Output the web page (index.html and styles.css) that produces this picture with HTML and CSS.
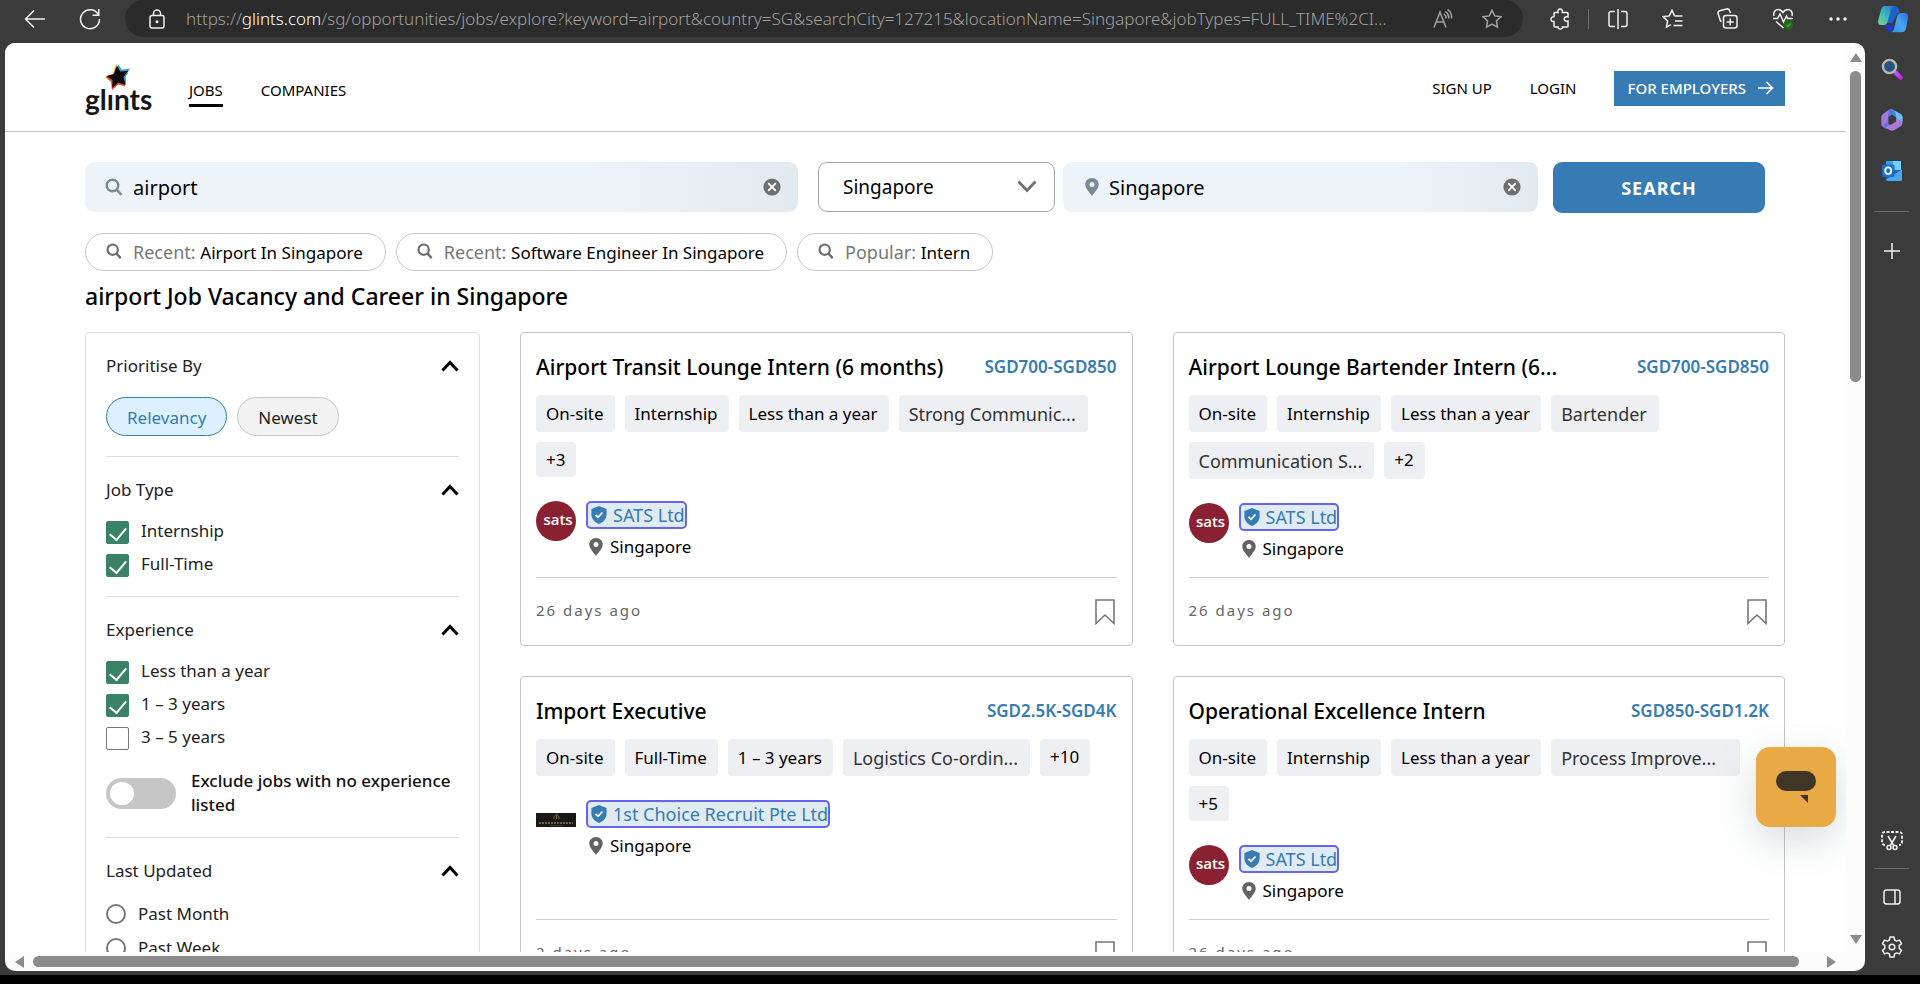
FILE: index.html
```html
<!DOCTYPE html>
<html lang="en">
<head>
<meta charset="utf-8">
<title>airport Job Vacancy and Career in Singapore</title>
<link rel="stylesheet" href="styles.css">
</head>
<body>
<svg class="defs" aria-hidden="true">
  <symbol id="search" viewBox="0 0 18 18"><circle cx="7.5" cy="7.5" r="5.8" fill="none" stroke="currentColor" stroke-width="2.4"/><path d="M11.7 11.7 16.5 17" stroke="currentColor" stroke-width="2.6"/></symbol>
  <symbol id="pin" viewBox="0 0 14 18"><path fill="currentColor" fill-rule="evenodd" d="M7 0C3.1 0 .3 2.9.3 6.4.3 10.500 4.500 14 7 18c2.500-4 6.700-7.500 6.700-11.600C13.700 2.900 10.900 0 7 0Zm0 4a2.500 2.500 0 1 1 0 5 2.500 2.500 0 0 1 0-5Z"/></symbol>
  <symbol id="clear" viewBox="0 0 18 18"><circle cx="9" cy="9" r="8.600" fill="#6f6f6f"/><path d="m5.200 5.200 7.600 7.600M12.800 5.200l-7.600 7.600" stroke="#fff" stroke-width="1.800"/></symbol>
  <symbol id="up" viewBox="0 0 18 12"><path d="m1.500 10.500 7.500-8 7.500 8" fill="none" stroke="#000" stroke-width="3"/></symbol>
  <symbol id="shield" viewBox="0 0 16 18"><path fill="#367bb3" d="M8 0 15.600 3v5.500C15.600 13 12 16.500 8 18 4 16.500.4 13 .4 8.500V3Z"/><path d="m4.500 8.800 2.500 2.500 4.500-4.800" fill="none" stroke="#fff" stroke-width="1.800"/></symbol>
  <symbol id="bookmark" viewBox="0 0 20 26"><path d="M1 1h18v23.500l-9-8.500-9 8.500Z" fill="none" stroke="#777" stroke-width="1.600"/></symbol>
</svg>

<header class="browser">
  <div class="browser-nav">
    <button class="tool" aria-label="Back"><svg width="22" height="20" viewBox="0 0 22 20"><path d="M21 10H1.500M10 1.500 1.500 10l8.500 8.500"/></svg></button>
    <button class="tool" aria-label="Refresh"><svg width="22" height="22" viewBox="0 0 22 22"><path d="M19.500 7A9.500 9.500 0 1 0 20.500 11M19.800 1v6.200h-6.300"/></svg></button>
  </div>
  <div class="address">
    <svg class="lock" width="16" height="20" viewBox="0 0 16 20"><rect x="1" y="6.500" width="14" height="12.500" rx="2"/><path d="M4.500 6.500V4.500a3.500 3.500 0 0 1 7 0v2"/><circle cx="8" cy="12.800" r=".8" fill="#fff"/></svg>
    <div class="url">https://<span class="host">glints.com</span>/sg/opportunities/jobs/explore?keyword=airport&amp;country=SG&amp;searchCity=127215&amp;locationName=Singapore&amp;jobTypes=FULL_TIME%2CI...</div>
    <button class="address-tool" aria-label="Read aloud"><svg width="20" height="20" viewBox="0 0 20 20"><path d="m1 18.500 6-15.500 6 15.500M3 13h8M11 5c1.500 1 2.200 2.500 2 4.500M12.500 2.500c2.500 1.700 3.500 4 3.200 7M14.500.5c3 2 4.300 5 4 9"/></svg></button>
    <button class="address-tool" aria-label="Add to favorites"><svg width="20" height="20" viewBox="0 0 20 20"><path d="m10 1.200 2.700 5.700 6.200.8-4.500 4.300 1.100 6.200L10 15.200l-5.500 3 1.100-6.200L1.100 7.700l6.200-.8Z"/></svg></button>
  </div>
  <div class="browser-tools">
    <button class="tool" aria-label="Extensions"><svg width="20" height="22" viewBox="0 0 20 22"><path d="M5 4.500h3C7.500 2 8.500 1 10 1s2.800 1 2.300 3.500H17a1 1 0 0 1 1 1V9c-2.500-.5-3.800.5-3.800 2s1.300 2.500 3.800 2v5a1 1 0 0 1-1 1h-4.500c.3 1.300-.8 2-2.200 2s-2.500-.7-2.200-2H5a1 1 0 0 1-1-1v-4.500c-1.500.2-3-.7-3-2.300s1.500-2.700 3-2.500V5.500a1 1 0 0 1 1-1Z"/></svg></button>
    <span class="tool-rule"></span>
    <button class="tool" aria-label="Split screen"><svg width="20" height="20" viewBox="0 0 20 20"><path d="M10 0v20M7 2.500H3a2 2 0 0 0-2 2v11a2 2 0 0 0 2 2h4M13 2.500h4a2 2 0 0 1 2 2v11a2 2 0 0 1-2 2h-4"/></svg></button>
    <button class="tool" aria-label="Favorites"><svg width="21" height="20" viewBox="0 0 21 20"><path d="M12.500 6.900 10 1.200 7.300 6.900l-6.200.8L5.600 12l-1.100 6.200 4.500-2.500M12.500 6.900H20.500M13 12h7.500M11.500 16.500h9"/></svg></button>
    <button class="tool" aria-label="Collections"><svg width="21" height="21" viewBox="0 0 21 21"><rect x="6.500" y="7.500" width="13.500" height="12.500" rx="2.500"/><path d="M13.200 10.500v7M9.700 14h7M4.500 13.500 3.500 13 1.200 6a2.500 2.500 0 0 1 1.500-3.200L9.500 1a2.500 2.500 0 0 1 3 1.500L13.500 5"/></svg></button>
    <button class="tool" aria-label="Browser essentials"><svg width="22" height="22" viewBox="0 0 22 22"><path d="M2 8C1 4 3.500 1.500 6 1.500c2.500 0 4 1.500 5 3 1-1.500 2.500-3 5-3s5 2.500 4 6.500M1 10.500h4.500L8 6l3.500 8 3-6 1 2.500H21M4 13.500l7.500 6.500"/><circle cx="16.500" cy="17" r="4.700" fill="#1f6b1a" stroke="none"/><path d="m14.500 17 1.500 1.500 2.500-3" stroke="#4a9a45"/></svg></button>
    <button class="tool" aria-label="Settings and more"><svg width="18" height="4" viewBox="0 0 18 4"><g fill="#fff" stroke="none"><circle cx="2" cy="2" r="1.700"/><circle cx="9" cy="2" r="1.700"/><circle cx="16" cy="2" r="1.700"/></g></svg></button>
    <button class="tool" aria-label="Copilot"><svg width="30" height="28" viewBox="0 0 30 28"><defs><linearGradient id="ca" x1="0" y1="1" x2="1" y2="0"><stop offset="0" stop-color="#7ed58c"/><stop offset=".5" stop-color="#3ab5c4"/><stop offset="1" stop-color="#1f6fd6"/></linearGradient><linearGradient id="cb" x1="0" y1="1" x2="1" y2="0"><stop offset="0" stop-color="#3a8ff0"/><stop offset=".5" stop-color="#47a6f2"/><stop offset="1" stop-color="#2f6fdf"/></linearGradient></defs><g stroke="none"><path fill="#1c62c8" d="M14 1h3c2 0 3 1 3.500 2.500L22 8h-2l-6 10H8Z"/><path fill="#2139c8" d="M7.500 20c1 5 2.500 7.300 6 7.300L16 20Z"/><path fill="url(#ca)" d="M7 1h10c-2 0-3.500 2-4.300 5l-3 10c-.9 3-1.700 4-4.200 4H3c-2.500 0-3.300-2-2.700-5L3 5c.8-2.600 2-4 4-4Z"/><path fill="url(#cb)" d="M13 27.300h11c2 0 3.300-1.500 4-4L30 13c.6-3-.4-5-3-5h-3.500c-2.500 0-3.500 1-4.500 4l-2.500 10c-1 3.500-1.500 5-3.500 5.300Z"/></g></svg></button>
  </div>
</header>

<div class="workspace">
  <div class="frame">
    <div class="viewport">
      <header class="site-header">
        <a class="logo" href="#" aria-label="glints">
          <svg width="28" height="28" viewBox="0 0 28 28"><path fill="#f6c93a" d="m12 1 3.800 6.500 8.400-.5-5 6.500 3 8.500-7.500-2.200L7.500 26l.2-8L1 13.500l7.500-2.500Z"/><path fill="#e5482e" d="m12 4 3.800 6.500 8.400-.5-5 6.500 2 7-7-2L8 27l-.8-8L1.500 14l7.500-2Z"/><path fill="#3fa0d8" d="m14 1 3.800 5.500 8.400-1-4.500 7 .5 9-8.700-3Z"/><path fill="#0b0b0b" d="m13 2.500 3.300 6 8-.8-4.800 6.300 2 8-7.200-2.500-6 5.500.2-8L2.500 13 10 11Z"/></svg>
          <span>glınts</span>
        </a>
        <nav class="nav">
          <a class="active" href="#">JOBS</a>
          <a href="#">COMPANIES</a>
        </nav>
        <nav class="account">
          <a href="#">SIGN UP</a>
          <a href="#">LOGIN</a>
          <a class="employers" href="#">FOR EMPLOYERS <svg width="16" height="14" viewBox="0 0 16 14"><path d="M0 7h14M8.500 1l6 6-6 6" fill="none" stroke="#fff" stroke-width="1.600"/></svg></a>
        </nav>
      </header>

      <main class="content">
        <form class="search-row">
          <label class="field"><svg class="field-icon" width="18" height="18"><use href="#search"/></svg><input type="text" value="airport" aria-label="Keyword"><button type="button" class="clear" aria-label="Clear keyword"><svg width="18" height="18"><use href="#clear"/></svg></button></label>
          <div class="country">
            <select aria-label="Country"><option>Singapore</option></select>
            <svg width="20" height="13" viewBox="0 0 20 13"><path d="m1.500 1.500 8.500 9 8.500-9" fill="none" stroke="#6f6f6f" stroke-width="2.800"/></svg>
          </div>
          <label class="field field-place"><svg class="field-icon" width="14" height="18"><use href="#pin"/></svg><input type="text" value="Singapore" aria-label="Location"><button type="button" class="clear" aria-label="Clear location"><svg width="18" height="18"><use href="#clear"/></svg></button></label>
          <button type="button" class="search-button">SEARCH</button>
        </form>

        <div class="recents">
          <a class="recent" href="#"><svg width="16" height="16"><use href="#search"/></svg><span>Recent: <b>Airport In Singapore</b></span></a>
          <a class="recent" href="#"><svg width="16" height="16"><use href="#search"/></svg><span>Recent: <b>Software Engineer In Singapore</b></span></a>
          <a class="recent" href="#"><svg width="16" height="16"><use href="#search"/></svg><span>Popular: <b>Intern</b></span></a>
        </div>

        <h1>airport Job Vacancy and Career in Singapore</h1>

        <div class="results">
          <aside class="filters">
            <section class="filter">
              <h2>Prioritise By <svg width="18" height="12"><use href="#up"/></svg></h2>
              <div class="sorts"><button class="sort selected">Relevancy</button><button class="sort">Newest</button></div>
            </section>
            <section class="filter">
              <h2>Job Type <svg width="18" height="12"><use href="#up"/></svg></h2>
              <div class="options">
                <label><input type="checkbox" checked>Internship</label>
                <label><input type="checkbox" checked>Full-Time</label>
              </div>
            </section>
            <section class="filter">
              <h2>Experience <svg width="18" height="12"><use href="#up"/></svg></h2>
              <div class="options">
                <label><input type="checkbox" checked>Less than a year</label>
                <label><input type="checkbox" checked>1 – 3 years</label>
                <label><input type="checkbox">3 – 5 years</label>
              </div>
              <label class="toggle"><input type="checkbox" role="switch"><span>Exclude jobs with no experience listed</span></label>
            </section>
            <section class="filter">
              <h2>Last Updated <svg width="18" height="12"><use href="#up"/></svg></h2>
              <div class="options radios">
                <label><input type="radio" name="updated">Past Month</label>
                <label><input type="radio" name="updated">Past Week</label>
              </div>
            </section>
          </aside>

          <div class="jobs">
            <article class="job">
              <div class="job-head"><h3>Airport Transit Lounge Intern (6 months)</h3><span class="salary">SGD700-SGD850</span></div>
              <div class="tags"><span class="tag">On-site</span><span class="tag">Internship</span><span class="tag">Less than a year</span><span class="tag skill">Strong Communic...</span><span class="tag more">+3</span></div>
              <div class="company">
                <span class="sats">sats</span>
                <div><a class="company-link" href="#"><svg width="16" height="18"><use href="#shield"/></svg>SATS Ltd</a><p class="place"><svg width="14" height="18"><use href="#pin"/></svg>Singapore</p></div>
              </div>
              <div class="job-foot"><time>26 days ago</time><button aria-label="Save job"><svg width="20" height="26"><use href="#bookmark"/></svg></button></div>
            </article>
            <article class="job">
              <div class="job-head"><h3>Airport Lounge Bartender Intern (6...</h3><span class="salary">SGD700-SGD850</span></div>
              <div class="tags"><span class="tag">On-site</span><span class="tag">Internship</span><span class="tag">Less than a year</span><span class="tag skill">Bartender</span><span class="tag skill">Communication S...</span><span class="tag more">+2</span></div>
              <div class="company">
                <span class="sats">sats</span>
                <div><a class="company-link" href="#"><svg width="16" height="18"><use href="#shield"/></svg>SATS Ltd</a><p class="place"><svg width="14" height="18"><use href="#pin"/></svg>Singapore</p></div>
              </div>
              <div class="job-foot"><time>26 days ago</time><button aria-label="Save job"><svg width="20" height="26"><use href="#bookmark"/></svg></button></div>
            </article>
            <article class="job">
              <div class="job-head"><h3>Import Executive</h3><span class="salary">SGD2.5K-SGD4K</span></div>
              <div class="tags"><span class="tag">On-site</span><span class="tag">Full-Time</span><span class="tag">1 – 3 years</span><span class="tag skill">Logistics Co-ordin...</span><span class="tag more">+10</span></div>
              <div class="company">
                <svg class="banner" width="40" height="14" viewBox="0 0 40 14"><rect width="40" height="14" fill="#191817"/><path d="M18 6V4l2.500-3L23 4v2M20.500 2.500V6" fill="none" stroke="#7d6d36"/><path d="M3 10h34" stroke="#6f6234" stroke-width="2" stroke-dasharray="2 1"/><path d="M14 12.500h13" stroke="#3f3a28"/></svg>
                <div><a class="company-link" href="#"><svg width="16" height="18"><use href="#shield"/></svg>1st Choice Recruit Pte Ltd</a><p class="place"><svg width="14" height="18"><use href="#pin"/></svg>Singapore</p></div>
              </div>
              <div class="job-foot"><time>2 days ago</time><button aria-label="Save job"><svg width="20" height="26"><use href="#bookmark"/></svg></button></div>
            </article>
            <article class="job">
              <div class="job-head"><h3>Operational Excellence Intern</h3><span class="salary">SGD850-SGD1.2K</span></div>
              <div class="tags"><span class="tag">On-site</span><span class="tag">Internship</span><span class="tag">Less than a year</span><span class="tag skill wide">Process Improve...</span><span class="tag more">+5</span></div>
              <div class="company">
                <span class="sats">sats</span>
                <div><a class="company-link" href="#"><svg width="16" height="18"><use href="#shield"/></svg>SATS Ltd</a><p class="place"><svg width="14" height="18"><use href="#pin"/></svg>Singapore</p></div>
              </div>
              <div class="job-foot"><time>26 days ago</time><button aria-label="Save job"><svg width="20" height="26"><use href="#bookmark"/></svg></button></div>
            </article>
          </div>
        </div>
      </main>
      <button class="chat" aria-label="Open chat"><svg width="40" height="32" viewBox="0 0 40 32"><rect width="40" height="20" rx="10" fill="#403628"/><path d="M24 24h8v8Z" fill="#403628"/></svg></button>
    </div>
    <div class="vbar" aria-hidden="true">
      <svg width="12" height="9" viewBox="0 0 12 9"><path d="M6 0 12 9H0Z" fill="#8b8b8b"/></svg>
      <div class="vtrack"><div class="vthumb"></div></div>
      <svg width="12" height="9" viewBox="0 0 12 9"><path d="M0 0h12L6 9Z" fill="#8b8b8b"/></svg>
    </div>
    <div class="hbar" aria-hidden="true">
      <svg width="9" height="12" viewBox="0 0 9 12"><path d="M9 0v12L0 6Z" fill="#8b8b8b"/></svg>
      <div class="hthumb"></div>
      <svg width="9" height="12" viewBox="0 0 9 12"><path d="m0 0 9 6-9 6Z" fill="#8b8b8b"/></svg>
    </div>
  </div>

  <aside class="sidebar">
    <button aria-label="Search"><svg width="22" height="22" viewBox="0 0 22 22"><defs><linearGradient id="sh" x1="0" y1="0" x2="1" y2="1"><stop offset="0" stop-color="#b35cf5"/><stop offset="1" stop-color="#c026e8"/></linearGradient></defs><path d="m12.500 12.500 3 3" stroke="#aaa" stroke-width="3"/><path d="m15 15 4.500 4.500" stroke="url(#sh)" stroke-width="4.500" stroke-linecap="round"/><circle cx="8.500" cy="8.500" r="6.600" fill="#24547e" stroke="#b9b7b4" stroke-width="2.400"/></svg></button>
    <button aria-label="Microsoft 365"><svg width="22" height="22" viewBox="0 0 22 22"><path fill="#6470dc" d="M8 1 11 0v5L7.500 7.500v7L11 17l-6 3-4-2.500Q.5 17 .5 15V7.500Q.5 6 2 5Z"/><path fill="#a27ad8" d="m2 5 6-4-1 6.500v5L1 17Q.5 16 .5 15V7.500Z"/><path fill="#4a80dc" d="M8 1q3-2 5 0l7 4q1.500 1 1.500 3v4L14.500 8 11 5.500 7.500 8Z"/><path fill="#66bff0" d="m14 2 6 3.500q1.500 1 1.500 3V13l-6-3Z"/><path fill="#a878d2" d="M21.500 13q0 3-1.500 4l-6.500 4q-2.500 1.500-5 0L4 18.500l7-3.500 4-2.500V9.500Z"/></svg></button>
    <button aria-label="Outlook"><svg width="22" height="22" viewBox="0 0 22 22"><path fill="#35a0e8" d="M5 1h15v14H5z"/><path fill="#6fd0f8" d="M12 1h8v9h-8z"/><path fill="#1b62b8" d="M5 10h16v9H5z"/><path fill="#4aa9ea" d="m21 9.500-16 10q.5 1.500 2 1.500h13q1 0 1-1Z"/><rect x="1" y="4.500" width="12.500" height="12.500" rx="1.500" fill="#1b6fc8"/><ellipse cx="7.200" cy="10.700" rx="3" ry="3.300" fill="none" stroke="#fff" stroke-width="1.700"/></svg></button>
    <hr>
    <button aria-label="Customize"><svg class="line" width="16" height="16" viewBox="0 0 16 16"><path d="M8 0v16M0 8h16"/></svg></button>
    <span class="spacer"></span>
    <button aria-label="Screenshot"><svg class="line" width="22" height="20" viewBox="0 0 22 20"><path stroke-width="1.800" stroke-dasharray="3 1.500" d="M4 14q-3 0-3-3V4q0-3 3-3h14q3 0 3 3v7q0 3-3 3"/><path d="m7 5 6 10M15 5 9 15"/><circle cx="8" cy="16.500" r="2"/><circle cx="14" cy="16.500" r="2"/></svg></button>
    <hr>
    <button aria-label="Side panel"><svg class="line" width="18" height="16" viewBox="0 0 18 16"><rect x="1" y="1" width="16" height="14" rx="2.500"/><path d="M12 1v14"/></svg></button>
    <button aria-label="Settings"><svg class="line" width="22" height="22" viewBox="0 0 22 22"><path d="M9 1h4l.6 3 2 1.100 2.900-1 2 3.500-2.300 2v2.800l2.300 2-2 3.500-2.900-1-2 1.100-.6 3H9l-.6-3-2-1.100-2.900 1-2-3.500 2.300-2V9.600l-2.300-2 2-3.500 2.900 1 2-1.100Z" stroke-linejoin="round"/><circle cx="11" cy="11" r="2.800"/></svg></button>
  </aside>
</div>
</body>
</html>
```
FILE: styles.css
```css
* { box-sizing: border-box; }

body {
  margin: 0;
  height: 100vh;
  display: flex;
  flex-direction: column;
  overflow: hidden;
  background: #3b3b3b;
  border-bottom: 9px solid #000;
  color: #000;
  font-family: "Noto Sans", sans-serif;
  font-size: 17px;
}

button {
  display: flex;
  align-items: center;
  justify-content: center;
  padding: 0;
  border: 0;
  background: none;
  color: inherit;
  font: inherit;
}

a { color: inherit; text-decoration: none; }
h1, h2, h3, p { margin: 0; font-weight: 400; }
svg { display: block; flex: none; }
.defs { position: absolute; width: 0; height: 0; }

/* Browser toolbar */
.browser { display: flex; height: 43px; flex: none; }
.browser-nav { display: flex; padding: 0 8px 0 7px; }
.browser svg, .line { fill: none; stroke: #f0f0f0; stroke-width: 1.5; }
.tool { width: 55px; height: 37px; }
.address {
  flex: 1;
  min-width: 0;
  height: 37px;
  margin-right: 9px;
  padding: 0 16px 0 24px;
  display: flex;
  align-items: center;
  border-radius: 19px;
  background: #2b2b2b;
}
.url {
  flex: 1;
  min-width: 0;
  margin-left: 21px;
  white-space: nowrap;
  color: #a0a0a0;
  font-size: 17px;
  font-weight: 300;
}
.host { color: #fff; }
.address-tool { width: 30px; height: 30px; margin-left: 19px; }
.browser .address-tool svg { stroke: #a3a3a3; }
.browser-tools { display: flex; }
.tool-rule { width: 1px; height: 20px; margin: 9px 1px; background: #6a6a6a; }

/* Frame, scroll bars, side bar */
.workspace { flex: 1; min-height: 0; display: flex; padding: 0 0 4px 5px; }
.frame {
  flex: 1;
  min-width: 0;
  display: grid;
  grid-template-columns: minmax(0, 1fr) 19px;
  grid-template-rows: minmax(0, 1fr) 19px;
  overflow: hidden;
  border-radius: 10px;
  background: #fcfcfc;
}
.viewport { position: relative; overflow: hidden; background: #fff; }
.vbar { display: flex; flex-direction: column; align-items: center; padding: 10px 0 8px; }
.vtrack { flex: 1; padding-top: 9px; }
.vthumb { width: 11px; height: 36%; border-radius: 6px; background: #8b8b8b; }
.hbar { display: flex; align-items: center; gap: 9px; padding: 0 10px; }
.hthumb { flex: 1; height: 11px; margin-right: 19px; border-radius: 6px; background: #8b8b8b; }
.sidebar { width: 55px; padding-right: 2px; display: flex; flex-direction: column; align-items: center; }
.sidebar button { width: 51px; height: 51px; }
.sidebar button:last-child { height: 49px; }
.sidebar hr { width: 35px; height: 1px; margin: 15px 0 13px; border: 0; background: #6a6a6a; }
.sidebar .spacer { flex: 1; }
.sidebar .spacer ~ hr { margin: 2px 0; }

/* Site header */
.site-header {
  height: 89px;
  display: flex;
  align-items: center;
  padding: 2px 61px 0 80px;
  border-bottom: 1px solid #c6c6c6;
  font-size: 15px;
}
.logo { display: flex; flex-direction: column; width: 66px; padding-top: 2px; }
.logo svg { margin-left: 19px; }
.logo span {
  height: 24px;
  color: #161616;
  font: 700 28px/16px Lato, sans-serif;
}
.nav { display: flex; gap: 38px; margin-left: 38px; padding-top: 6px; }
.nav a { height: 31px; line-height: 28px; border-bottom: 3px solid transparent; }
.nav .active { border-color: #000; }
.account { display: flex; align-items: center; gap: 38px; margin-left: auto; }
.employers {
  display: flex;
  align-items: center;
  gap: 12px;
  height: 35px;
  padding: 0 11px 0 13px;
  background: #367bb3;
  color: #fff;
  font-weight: 500;
}

/* Search */
.content { padding: 30px 61px 0 80px; }
.search-row {
  display: grid;
  grid-template-columns: minmax(0, 713fr) 20px minmax(0, 237fr) 8px minmax(0, 475fr) 15px minmax(0, 212fr);
  padding-right: 20px;
  font-size: 20px;
}
.field {
  grid-column: 1;
  display: flex;
  align-items: center;
  height: 50px;
  padding: 0 17px 0 20px;
  border-radius: 9px;
  background: linear-gradient(90deg, #ecf4f9 70%, #e3eaef);
}
.field input {
  flex: 1;
  min-width: 0;
  padding: 0;
  border: 0;
  outline: 0;
  background: none;
  color: #000;
  font: inherit;
}
.field-icon { margin-right: 10px; color: #7d899b; }
.field-place { grid-column: 5; padding-left: 22px; }
.country { position: relative; grid-column: 3; }
.country select {
  appearance: none;
  width: 100%;
  height: 50px;
  padding: 0 24px;
  border: 1px solid #a3a3a3;
  border-radius: 9px;
  background: #fff;
  color: #000;
  font: inherit;
  font-size: 19px;
}
.country svg { position: absolute; right: 18px; top: 18px; pointer-events: none; }
.search-button {
  grid-column: 7;
  height: 51px;
  border-radius: 9px;
  background: #367bb3;
  color: #fff;
  font-size: 18px;
  font-weight: 700;
  letter-spacing: 1px;
}
.recents { display: flex; gap: 10px; margin-top: 20px; }
.recent {
  display: flex;
  height: 38px;
  padding: 0 22px 0 20px;
  gap: 11px;
  border: 1px solid #c6c6c6;
  border-radius: 19px;
  color: #777;
  font-size: 18px;
  line-height: 36px;
}
.recent svg { margin-top: 9px; color: #6a6a6a; }
.recent b { color: #000; font-size: 17px; font-weight: 400; }
h1 { margin: 9px 0 20px; font-size: 23px; line-height: 32px; font-weight: 500; }

/* Filters */
.results {
  display: grid;
  grid-template-columns: minmax(0, 395fr) minmax(0, 1265fr);
  gap: 40px;
  align-items: start;
}
.filters { padding: 0 20px; border: 1px solid #dcdcdc; border-radius: 4px; color: #222; }
.filter { padding: 21px 0 20px; border-bottom: 1px solid #dcdcdc; }
.filter h2 {
  display: flex;
  align-items: center;
  justify-content: space-between;
  margin-bottom: 19px;
  font-size: 17px;
  line-height: 24px;
}
.sorts { display: flex; gap: 10px; }
.sort {
  height: 39px;
  padding: 2px 20px 0;
  border: 1px solid #c6c6c6;
  border-radius: 20px;
  background: #f2f2f2;
}
.sort.selected { border-color: #367bb3; background: #dcf1fd; color: #367bb3; }
.options { display: flex; flex-direction: column; gap: 11px; }
.options label { display: flex; align-items: flex-start; gap: 12px; height: 22px; line-height: 20px; }
.options input { appearance: none; flex: none; margin: 0; border: 1px solid #777; }
.options [type="checkbox"] { width: 23px; height: 23px; border-radius: 2px; }
.options [type="checkbox"]:checked { border-color: #3a8266; background: #3a8266; }
.options [type="checkbox"]:checked::before {
  content: "";
  display: block;
  width: 8px;
  height: 14px;
  margin: 2px 0 0 6px;
  border: solid #fff;
  border-width: 0 2px 2px 0;
  transform: rotate(40deg);
}
.radios { gap: 10px; }
.radios label { align-items: center; height: 24px; line-height: 24px; }
.options [type="radio"] { width: 20px; height: 20px; border: 2px solid #777; border-radius: 50%; }
.toggle { display: flex; align-items: center; gap: 15px; margin-top: 20px; color: #111; font-weight: 500; line-height: 24px; }
.toggle input {
  appearance: none;
  flex: none;
  width: 70px;
  height: 31px;
  margin: 0;
  padding: 4px;
  border-radius: 16px;
  background: #c6c6c6;
}
.toggle input::before { content: ""; display: block; width: 24px; height: 23px; border-radius: 50%; background: #fff; }

/* Job cards */
.jobs { display: grid; grid-template-columns: repeat(2, minmax(0, 1fr)); gap: 30px 40px; }
.job { display: flex; flex-direction: column; padding: 20px 15px 0; border: 1px solid #c6c6c6; border-radius: 4px; }
.job-head { display: flex; justify-content: space-between; align-items: center; line-height: 28px; white-space: nowrap; }
h3 { font-size: 21px; font-weight: 500; }
.salary { color: #367bb3; font-size: 17px; font-weight: 600; }
.tags { display: flex; flex-wrap: wrap; gap: 10px; margin-top: 14px; }
.tag { padding: 1px 11px 0 10px; border-radius: 4px; background: #eeeff3; line-height: 36px; }
.skill { padding: 1px 12px 0 10px; color: #333; font-size: 18px; }
.wide { padding-right: 24px; }
.more { line-height: 34px; }
.company { display: flex; gap: 10px; margin: 24px 0 16px; }
.sats, .banner { width: 40px; height: 40px; }
.sats {
  padding-left: 4px;
  border-radius: 50%;
  background: #8a2132;
  color: #fff;
  font: 600 15px/36px "Open Sans", sans-serif;
  text-align: center;
}
.company-link {
  display: flex;
  align-items: center;
  gap: 6px;
  height: 28px;
  padding: 0 0 0 3px;
  border: 2px solid #6464f0;
  border-radius: 5px;
  background: #dfebf1;
  color: #367bb3;
  font-size: 18px;
}
.company > div { display: flex; flex-direction: column; align-items: flex-start; gap: 6px; }
.place { display: flex; align-items: center; gap: 7px; padding-left: 3px; line-height: 24px; }
.place svg { color: #636363; }
.job-foot {
  display: flex;
  align-items: center;
  justify-content: space-between;
  height: 68px;
  margin-top: auto;
  padding-right: 2px;
  border-top: 1px solid #cfcfd3;
  color: #666;
  font-size: 15px;
  letter-spacing: 2px;
}
.job-foot time { padding-bottom: 3px; }

.chat {
  position: absolute;
  right: 10px;
  bottom: 125px;
  width: 80px;
  height: 80px;
  border-radius: 14px;
  background: #e9a944;
  box-shadow: 0 12px 40px rgba(60, 90, 100, .22);
}
```
